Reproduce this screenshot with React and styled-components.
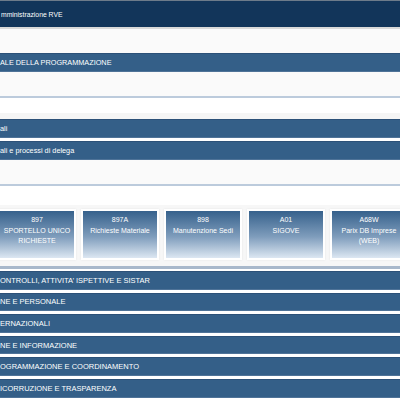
import React from 'react';
import styled, { createGlobalStyle } from 'styled-components';

const GlobalStyle = createGlobalStyle`
  html, body {
    margin: 0;
    padding: 0;
    background: #ffffff;
    font-family: "Liberation Sans", Arial, sans-serif;
    overflow: hidden;
  }
`;

const Page = styled.div`
  width: 400px;
  height: 400px;
  overflow: hidden;
  border-top: 1px solid #6d7b8a;
  box-sizing: border-box;
`;

const Header = styled.div`
  height: 26px;
  background: #12355a;
  color: #ffffff;
  font-size: 6.8px;
  display: flex;
  align-items: center;
  padding-left: 1px;
  border-bottom: 2px solid #d9d9d9;
`;

const Panel = styled.div`
  height: ${(p) => p.$h}px;
  background: #fafafa;
  border-bottom: ${(p) => (p.$line ? '2px solid #bccbdc' : 'none')};
`;

const Spacer = styled.div`
  height: ${(p) => p.$h}px;
  background: ${(p) => p.$bg || '#ffffff'};
`;

const Bar = styled.div`
  height: ${(p) => p.$h || 19}px;
  box-sizing: border-box;
  background: #345f88;
  color: #ffffff;
  font-size: ${(p) => p.$fs || 7.3}px;
  display: flex;
  align-items: center;
  white-space: nowrap;
  border-top: 1px solid #2c5178;
  border-bottom: 1px solid #4f7398;
  margin-bottom: ${(p) => p.$mb || 0}px;
`;

const TileArea = styled.div`
  background: #f7f7f7;
  padding: 4px 0 6px 0;
  border-bottom: 3px solid #a8b8cb;
  margin-bottom: 2px;
`;

const TileRow = styled.div`
  display: flex;
  gap: 5px;
  margin-left: -2px;
`;

const Tile = styled.div`
  flex: 0 0 74px;
  height: 43px;
  border: 2px solid #ffffff;
  background: linear-gradient(to bottom, #36618c 0%, #7f9dbc 55%, #dce7f2 100%);
  color: #ffffff;
  font-size: 7px;
  line-height: 10.6px;
  text-align: center;
  padding-top: 4px;
  box-sizing: content-box;
  box-shadow: 0 0 2px rgba(0, 0, 0, 0.08);
`;

const TileText = styled.div`
  padding: 0 2px;
`;

const tiles = [
  { code: '897', label: 'SPORTELLO UNICO RICHIESTE' },
  { code: '897A', label: 'Richieste Materiale' },
  { code: '898', label: 'Manutenzione Sedi' },
  { code: 'A01', label: 'SIGOVE' },
  { code: 'A68W', label: 'Parix DB Imprese (WEB)' },
];

const sections = [
  'ONTROLLI, ATTIVITA\u2019 ISPETTIVE E SISTAR',
  'NE E PERSONALE',
  'ERNAZIONALI',
  'NE E INFORMAZIONE',
  'OGRAMMAZIONE E COORDINAMENTO',
  'ICORRUZIONE E TRASPARENZA',
];

export default function App() {
  return (
    <>
      <GlobalStyle />
      <Page>
        <Header>mministrazione RVE</Header>
        <Panel $h={24} />
        <Bar>ALE DELLA PROGRAMMAZIONE</Bar>
        <Panel $h={24} $line />
        <Spacer $h={15} />
        <Spacer $h={6} $bg="#f5f5f5" />
        <Bar>ali</Bar>
        <Spacer $h={3} />
        <Bar>ali e processi di delega</Bar>
        <Panel $h={24} $line />
        <Spacer $h={19} />
        <TileArea>
          <TileRow>
            {tiles.map((t) => (
              <Tile key={t.code}>
                <TileText>{t.code}</TileText>
                <TileText>{t.label}</TileText>
              </Tile>
            ))}
          </TileRow>
        </TileArea>
        {sections.map((s) => (
          <Bar key={s} $h={18.6} $mb={3} $fs={7.5}>
            {s}
          </Bar>
        ))}
      </Page>
    </>
  );
}
